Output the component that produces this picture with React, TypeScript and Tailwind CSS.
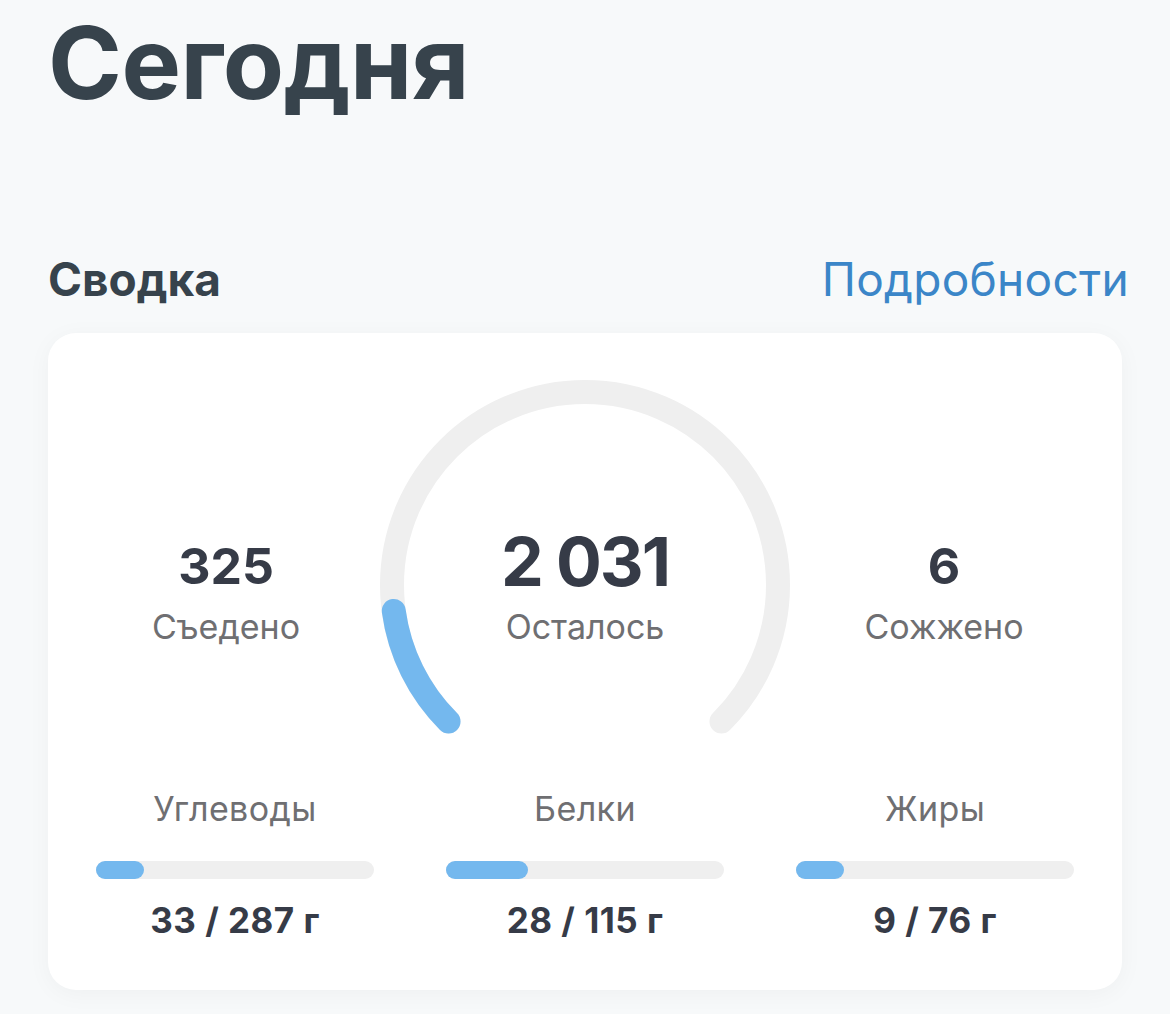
import React from 'react';

const macros = [
  { label: 'Углеводы', value: '33 / 287 г', fill: 48 },
  { label: 'Белки', value: '28 / 115 г', fill: 82 },
  { label: 'Жиры', value: '9 / 76 г', fill: 48 },
];

// gauge: 270° arc, centre (205,205), r 193
const R = 193;
const CX = 205;
const CY = 205;

function point(deg: number) {
  const rad = (deg * Math.PI) / 180;
  return [CX + R * Math.cos(rad), CY + R * Math.sin(rad)];
}

function arc(from: number, to: number) {
  const [x1, y1] = point(from);
  const [x2, y2] = point(to);
  const large = to - from > 180 ? 1 : 0;
  return `M ${x1} ${y1} A ${R} ${R} 0 ${large} 1 ${x2} ${y2}`;
}

function Gauge() {
  const start = 135;
  const end = 405;
  const eaten = start + 0.138 * 270;
  return (
    <svg width="410" height="360" viewBox="0 0 410 360" className="absolute left-0 top-0">
      <path d={arc(start, end)} fill="none" stroke="#efefef" strokeWidth={24} strokeLinecap="round" />
      <path d={arc(start, eaten)} fill="none" stroke="#74b8ee" strokeWidth={24} strokeLinecap="round" />
    </svg>
  );
}

export default function App() {
  return (
    <div className="min-h-screen bg-[#f7f9fa] px-12 pt-[13px] font-['Inter',sans-serif]">
      <h1 className="text-[100px] leading-none font-bold text-[#37434c] tracking-[-0.5px]">Сегодня</h1>

      <div className="mt-[143px] flex items-baseline justify-between">
        <h2 className="text-[46px] leading-none font-bold text-[#37434c]">Сводка</h2>
        <a href="#" className="-mr-[7px] text-[46px] leading-none tracking-[0.3px] text-[#3b86c8]">Подробности</a>
      </div>

      <div className="mt-[31px] rounded-[28px] bg-white pt-[47px] pb-[52px] shadow-[0_4px_24px_rgba(0,0,0,0.04)]">
        <div className="grid h-[360px] grid-cols-[1fr_410px_1fr] px-6">
          <div className="flex flex-col items-center pt-[161px]">
            <span className="text-[50px] leading-none font-bold text-[#363b47]">325</span>
            <span className="mt-[19px] text-[34px] leading-none text-[#6f6f72]">Съедено</span>
          </div>
          <div className="relative flex flex-col items-center pt-[147px]">
            <Gauge />
            <span className="relative text-[68px] leading-none font-bold text-[#363b47] tracking-[-2px]">2 031</span>
            <span className="relative mt-[15px] text-[34px] leading-none text-[#6f6f72]">Осталось</span>
          </div>
          <div className="flex flex-col items-center pt-[161px]">
            <span className="text-[50px] leading-none font-bold text-[#363b47]">6</span>
            <span className="mt-[19px] text-[34px] leading-none text-[#6f6f72]">Сожжено</span>
          </div>
        </div>

        <div className="mt-[52px] grid grid-cols-3 gap-[72px] px-12">
          {macros.map((m) => (
            <div key={m.label} className="flex flex-col items-center">
              <span className="text-[34px] leading-none tracking-[0.4px] text-[#6f6f72]">{m.label}</span>
              <div className="mt-[35px] h-[18px] w-full rounded-full bg-[#efefef]">
                <div className="h-full rounded-full bg-[#74b8ee]" style={{ width: m.fill }} />
              </div>
              <span className="mt-[24px] text-[35px] leading-none font-bold tracking-[0.5px] text-[#363b47]">{m.value}</span>
            </div>
          ))}
        </div>
      </div>
    </div>
  );
}
